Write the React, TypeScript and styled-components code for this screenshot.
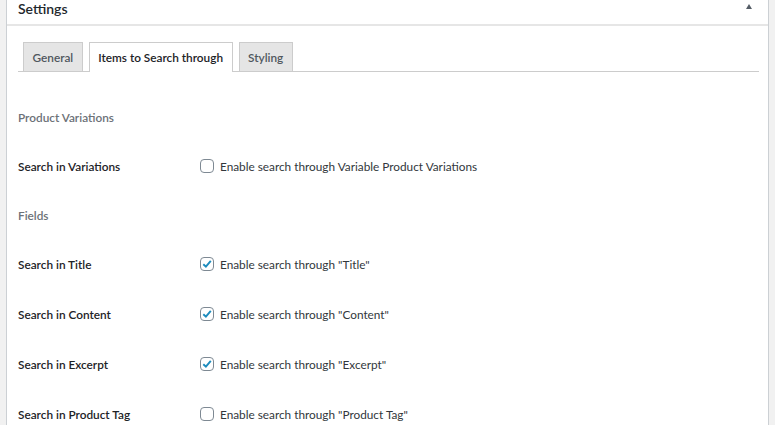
import React from "react";
import styled, { createGlobalStyle } from "styled-components";

const GlobalStyle = createGlobalStyle`
  html, body {
    margin: 0;
    padding: 0;
    background: #f1f1f1;
    font-family: Lato, "Noto Sans", sans-serif;
    font-size: 11.8px;
    color: #3c434a;
  }
`;

const Page = styled.div`
  padding: 0 6px;
  height: 425px;
  overflow: hidden;
`;

const Panel = styled.section`
  background: #fff;
  border: 1px solid #ccd0d4;
  border-top: none;
  min-height: 430px;
`;

const Header = styled.header`
  display: flex;
  align-items: flex-start;
  justify-content: space-between;
  height: 24px;
  padding: 0 16px 0 11px;
  border-bottom: 2px solid #e6e6e6;
`;

const HeaderTitle = styled.h2`
  margin: 0;
  font-size: 14px;
  line-height: 17px;
  font-weight: 600;
  color: #23282d;
`;

const Toggle = styled.span`
  margin-top: 4px;
  width: 0;
  height: 0;
  border-left: 3.5px solid transparent;
  border-right: 3.5px solid transparent;
  border-bottom: 5px solid #555d66;
`;

const Body = styled.div`
  padding: 16px 9px 0 11px;
`;

const TabBar = styled.nav`
  display: flex;
  gap: 6px;
  padding-left: 5px;
  border-bottom: 1px solid #ccc;
`;

const Tab = styled.div<{ active?: boolean }>`
  height: 28px;
  padding: 0 8.5px;
  display: flex;
  align-items: center;
  font-weight: 600;
  color: ${p => (p.active ? "#1d2327" : "#50575e")};
  background: ${p => (p.active ? "#fff" : "#e5e5e5")};
  border: 1px solid #ccc;
  border-bottom: none;
  margin-bottom: ${p => (p.active ? "-1px" : "0")};
  padding-bottom: ${p => (p.active ? "1px" : "0")};
`;

const Form = styled.div`
  padding-top: 21px;
`;

const Row = styled.div<{ heading?: boolean }>`
  display: flex;
  align-items: center;
  height: ${p => (p.heading ? "48px" : "50px")};
`;

const SectionHeading = styled.div`
  font-weight: 600;
  color: #6c7177;
`;

const Label = styled.div`
  width: 182px;
  font-weight: 600;
  color: #1d2327;
`;

const Option = styled.label`
  display: flex;
  align-items: center;
  gap: 6px;
  color: #32373c;
`;

const Box = styled.span`
  box-sizing: border-box;
  width: 14px;
  height: 14px;
  border: 1px solid #7e8993;
  border-radius: 4px;
  background: #fff;
  display: flex;
  align-items: center;
  justify-content: center;
`;

const Check = () => (
  <svg width="12" height="12" viewBox="0 0 12 12">
    <path d="M2.3 6.2 L4.9 8.7 L9.8 2.8" fill="none" stroke="#1e8cbe" strokeWidth="1.9" />
  </svg>
);

type FieldProps = { label: string; text: string; checked?: boolean };

const Field = ({ label, text, checked }: FieldProps) => (
  <Row>
    <Label>{label}</Label>
    <Option>
      <Box>{checked && <Check />}</Box>
      {text}
    </Option>
  </Row>
);

const App = () => {
  return (
    <Page>
      <GlobalStyle />
      <Panel>
        <Header>
          <HeaderTitle>Settings</HeaderTitle>
          <Toggle />
        </Header>
        <Body>
          <TabBar>
            <Tab>General</Tab>
            <Tab active>Items to Search through</Tab>
            <Tab>Styling</Tab>
          </TabBar>
          <Form>
            <Row heading>
              <SectionHeading>Product Variations</SectionHeading>
            </Row>
            <Field label="Search in Variations" text="Enable search through Variable Product Variations" />
            <Row heading>
              <SectionHeading>Fields</SectionHeading>
            </Row>
            <Field label="Search in Title" text={'Enable search through "Title"'} checked />
            <Field label="Search in Content" text={'Enable search through "Content"'} checked />
            <Field label="Search in Excerpt" text={'Enable search through "Excerpt"'} checked />
            <Field label="Search in Product Tag" text={'Enable search through "Product Tag"'} />
          </Form>
        </Body>
      </Panel>
    </Page>
  );
};

export default App;
